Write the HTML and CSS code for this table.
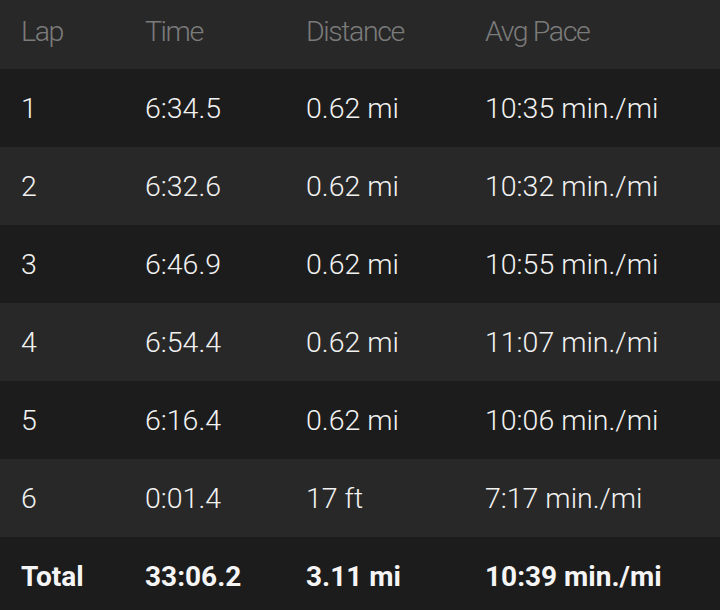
FILE: index.html
```html
<!DOCTYPE html>
<html>
<head>
<meta charset="utf-8">
<link rel="stylesheet" href="styles.css">
</head>
<body>
<div class="table">
  <div class="row head"><span>Lap</span><span>Time</span><span>Distance</span><span>Avg Pace</span></div>
  <div class="row odd"><span>1</span><span>6:34.5</span><span>0.62 mi</span><span>10:35 min./mi</span></div>
  <div class="row even"><span>2</span><span>6:32.6</span><span>0.62 mi</span><span>10:32 min./mi</span></div>
  <div class="row odd"><span>3</span><span>6:46.9</span><span>0.62 mi</span><span>10:55 min./mi</span></div>
  <div class="row even"><span>4</span><span>6:54.4</span><span>0.62 mi</span><span>11:07 min./mi</span></div>
  <div class="row odd"><span>5</span><span>6:16.4</span><span>0.62 mi</span><span>10:06 min./mi</span></div>
  <div class="row even"><span>6</span><span>0:01.4</span><span>17 ft</span><span>7:17 min./mi</span></div>
  <div class="row odd total"><span>Total</span><span>33:06.2</span><span>3.11 mi</span><span>10:39 min./mi</span></div>
</div>
</body>
</html>
```

FILE: styles.css
```css
html, body {
  margin: 0;
  padding: 0;
  background: #1c1c1c;
  overflow: hidden;
}
.table {
  width: 720px;
  font-family: Roboto, "Liberation Sans", sans-serif;
  font-size: 28.5px;
  font-weight: 300;
  color: #f2f2f2;
}
.row {
  display: grid;
  grid-template-columns: 124px 161px 179px 1fr;
  align-items: center;
  padding-left: 21px;
  height: 78px;
  box-sizing: border-box;
  white-space: nowrap;
}
.head {
  height: 69px;
  padding-bottom: 6px;
  background: #282828;
  color: #7b7b7b;
  letter-spacing: -1.4px;
}
.odd { background: #1c1c1c; }
.even { background: #282828; }
.total { font-weight: 700; font-size: 28px; color: #f5f5f5; }
```
